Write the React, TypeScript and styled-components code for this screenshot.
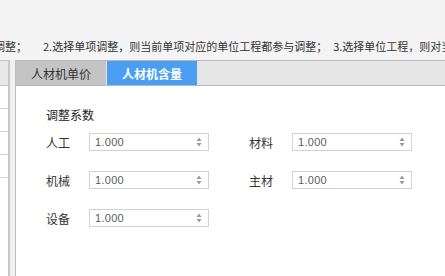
import styled, { createGlobalStyle } from "styled-components";

const GlobalStyle = createGlobalStyle`
  html, body {
    margin: 0;
    padding: 0;
    background: #f4f4f4;
  }
  * {
    box-sizing: border-box;
  }
`;

const Page = styled.div`
  display: flex;
  flex-direction: column;
  height: 100vh;
  font-family: "Liberation Sans", "Noto Sans CJK SC", sans-serif;
  color: #333;
  overflow: hidden;
`;

const Notice = styled.div`
  height: 60px;
  flex: none;
  display: flex;
  align-items: center;
  padding-top: 32px;
  overflow: hidden;
  background: #f4f4f4;
`;

const NoticeLine = styled.div`
  display: flex;
  margin-left: -39px;
  white-space: nowrap;
  font-family: "Noto Sans CJK SC", sans-serif;
  font-size: 11px;
  color: #333;
`;

const NoticeItem = styled.span<{ $gap?: number }>`
  margin-left: ${({ $gap }) => $gap ?? 0}px;
`;

const Body = styled.div`
  flex: 1;
  display: flex;
  min-height: 0;
`;

const SidePanel = styled.div`
  width: 10px;
  flex: none;
  border-top: 1px solid #c6c6c6;
  border-right: 2px solid #c6c6c6;
  background: #fff;
`;

const SideHeader = styled.div`
  height: 25px;
  background: #e8e8e8;
  border-bottom: 1px solid #c8c8c8;
`;

const SideRow = styled.div`
  height: 23px;
  border-bottom: 1px solid #d4d4d4;
`;

const Splitter = styled.div`
  width: 5px;
  flex: none;
  background: #f0f0f0;
`;

const MainPanel = styled.div`
  flex: 1;
  display: flex;
  flex-direction: column;
  border-top: 1px solid #b5b5b5;
  border-left: 1px solid #bdbdbd;
  background: #fff;
`;

const TabBar = styled.div`
  height: 25px;
  flex: none;
  display: flex;
  gap: 1px;
  background: #e6e6e6;
  border-bottom: 1px solid #b8b8b8;
`;

const Tab = styled.div<{ $active?: boolean }>`
  width: 90px;
  display: flex;
  align-items: center;
  justify-content: center;
  font-family: "Noto Sans CJK SC", sans-serif;
  font-size: 12px;
  font-weight: ${({ $active }) => ($active ? 700 : 400)};
  color: ${({ $active }) => ($active ? "#fff" : "#333")};
  background: ${({ $active }) => ($active ? "#4a9ff5" : "#c4c4c4")};
`;

const Content = styled.div`
  flex: 1;
  padding: 20px 0 0 30px;
`;

const SectionTitle = styled.div`
  height: 18px;
  line-height: 18px;
  margin-bottom: 9px;
  font-family: "Noto Sans CJK SC", sans-serif;
  font-size: 12px;
  color: #222;
`;

const FieldGrid = styled.div`
  display: grid;
  grid-template-columns: repeat(2, 163px);
  column-gap: 40px;
  row-gap: 20px;
`;

const Field = styled.div`
  display: grid;
  grid-template-columns: 43px 120px;
  align-items: center;
`;

const Label = styled.span`
  font-family: "Noto Sans CJK SC", sans-serif;
  font-size: 12px;
  color: #333;
`;

const SpinBox = styled.div`
  height: 18px;
  display: flex;
  align-items: center;
  justify-content: space-between;
  padding: 0 6px 0 5px;
  border: 1px solid #d2d2d2;
  background: #fff;
  font-family: "Liberation Sans", Arial, sans-serif;
  font-size: 11px;
  letter-spacing: 0.3px;
  color: #5c5c5c;
`;

const Arrows = () => (
  <svg width="6" height="10" viewBox="0 0 6 10">
    <path d="M3 0.5 L5.5 4 L0.5 4 Z" fill="#9a9a9a" />
    <path d="M0.5 6 L5.5 6 L3 9.5 Z" fill="#9a9a9a" />
  </svg>
);

const fields = [
  { label: "人工", value: "1.000" },
  { label: "材料", value: "1.000" },
  { label: "机械", value: "1.000" },
  { label: "主材", value: "1.000" },
  { label: "设备", value: "1.000" },
];

export default function App() {
  return (
    <Page>
      <GlobalStyle />
      <Notice>
        <NoticeLine>
          <NoticeItem>都参与调整；</NoticeItem>
          <NoticeItem $gap={16}>2.选择单项调整，则当前单项对应的单位工程都参与调整；</NoticeItem>
          <NoticeItem $gap={6}>3.选择单位工程，则对当前单位工程进行调整。</NoticeItem>
        </NoticeLine>
      </Notice>
      <Body>
        <SidePanel>
          <SideHeader />
          <SideRow />
          <SideRow />
          <SideRow />
          <SideRow />
        </SidePanel>
        <Splitter />
        <MainPanel>
          <TabBar>
            <Tab>人材机单价</Tab>
            <Tab $active>人材机含量</Tab>
          </TabBar>
          <Content>
            <SectionTitle>调整系数</SectionTitle>
            <FieldGrid>
              {fields.map((f) => (
                <Field key={f.label}>
                  <Label>{f.label}</Label>
                  <SpinBox>
                    <span>{f.value}</span>
                    <Arrows />
                  </SpinBox>
                </Field>
              ))}
            </FieldGrid>
          </Content>
        </MainPanel>
      </Body>
    </Page>
  );
}
